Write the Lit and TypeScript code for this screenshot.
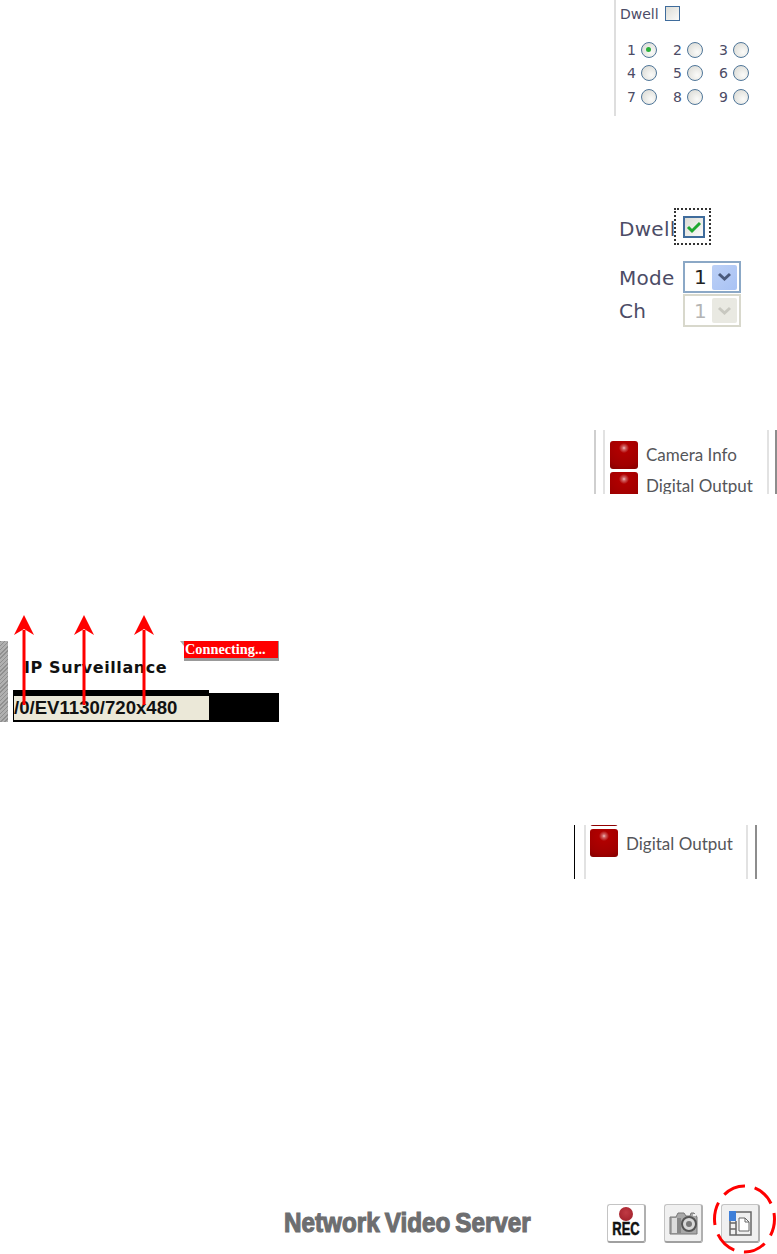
import { LitElement, html, css, svg } from "lit";
import { customElement } from "lit/decorators.js";

@customElement("app-root")
export class AppRoot extends LitElement {
  static styles = css`
    :host { display: block; position: relative; width: 777px; height: 1254px; background: #fff; overflow: hidden; font-family: "DejaVu Sans", sans-serif; }
    .fig { position: absolute; box-sizing: border-box; }

    /* figure 1 */
    .f1 { left: 614px; top: 0; width: 140px; height: 116px; border-left: 2px solid #dedede; color: #4c4c66; font-size: 14px; padding: 6px 0 0 4px; }
    .dwell1 { display: flex; align-items: center; gap: 6px; height: 15px; font-size: 14px; }
    .cb { width: 15px; height: 15px; box-sizing: border-box; border: 1.5px solid #3f6c9c; background: linear-gradient(135deg, #dcdcd6, #fbfbf9); }
    .radios { display: grid; grid-template-columns: repeat(3, 46px); grid-auto-rows: 23.5px; margin: 17px 0 0 7px; }
    .rd { display: flex; align-items: center; gap: 5px; font-size: 14px; }
    .radio { width: 16px; height: 16px; box-sizing: border-box; border: 1.5px solid #4f7699; border-radius: 50%; background: radial-gradient(circle at 65% 65%, #fbfbf9, #d6d6d0); display: flex; align-items: center; justify-content: center; }
    .dot { width: 5px; height: 5px; border-radius: 50%; background: #2ab03a; }

    /* figure 2 */
    .f2 { left: 619px; top: 207px; width: 124px; height: 122px; color: #4c4c66; font-size: 20px; }
    .row2 { display: flex; align-items: center; }
    .row-dwell { height: 44px; letter-spacing: .3px; }
    .lbl { width: 64px; letter-spacing: .3px; padding-top: 1px; }
    .focus { position: absolute; left: 55px; top: 1px; width: 37px; height: 37px; box-sizing: border-box; border: 2px dotted #333; }
    .cb2 { position: absolute; left: 64px; top: 9px; width: 22px; height: 22px; box-sizing: border-box; border: 2px solid #3f6c9c; background: linear-gradient(135deg, #dcdcd6, #fbfbf9); display: flex; align-items: center; justify-content: center; }
    .selects { margin-top: 10px; display: flex; flex-direction: column; gap: 1px; }
    .sel { width: 58px; height: 32px; box-sizing: border-box; border: 2px solid #8ba8c6; background: #fff; display: flex; align-items: center; justify-content: space-between; padding: 2px; color: #222; font-size: 20px; }
    .sel span { padding-left: 7px; }
    .sel .btn { width: 25px; height: 25px; border-radius: 2px; background: linear-gradient(135deg, #bcd0f6, #a8c2f4); display: flex; align-items: center; justify-content: center; }
    .sel.off { border-color: #d8d8cc; color: #b4b4b4; height: 33px; }
    .sel.off .btn { background: #e9e9e2; }

    /* sidebar figures */
    .f3 { left: 594px; top: 430px; width: 183px; height: 64px; overflow: hidden; border-left: 2px solid #cfcfcf; border-right: 2px solid #8d8d8d; }
    .f5 { left: 574px; top: 825px; width: 183px; height: 54px; overflow: hidden; border-left: 1px solid #000; border-right: 2px solid #8d8d8d; }
    .inner { position: absolute; top: 0; bottom: 0; box-sizing: border-box; border-left: 2px solid #e2e2e2; border-right: 2px solid #e2e2e2; display: flex; flex-direction: column; gap: 3px; }
    .f3 .inner { left: 7px; right: 6px; padding: 11px 0 0 5px; }
    .f5 .inner { left: 9px; right: 7px; padding: 0 0 0 4px; margin-top: -27px; }
    .item { display: flex; align-items: center; gap: 8px; font-family: "Lato", sans-serif; font-size: 17px; line-height: 16px; color: #55565a; white-space: nowrap; }
    .f5 .item { padding-top: 0; }
    .f5 .txt { padding-top: 2px; }
    .led { flex: none; width: 28px; height: 28px; border-radius: 3px; background: radial-gradient(circle at 50% 25%, #f0c0c0 0, #d06060 7%, #b00000 20%, #a00000 70%, #820000 100%); }

    /* figure 4 */
    .f4 { left: 0; top: 641px; width: 279px; height: 81px; }
    .hatch { position: absolute; left: 0; top: 0; width: 8px; height: 100%; background: repeating-linear-gradient(135deg, #8f8f8f 0 1px, #b0b0b0 1px 3px); }
    .title { position: absolute; left: 24px; top: 17px; font-family: "DejaVu Sans", sans-serif; font-weight: 700; font-size: 16px; letter-spacing: .6px; color: #111; white-space: nowrap; }
    .conn { position: absolute; left: 184px; top: 0; width: 95px; height: 20px; box-sizing: border-box; background: #f00; border-right: 1px solid #999; border-bottom: 3px solid #999; color: #fff; font: 700 14.3px/16px "Liberation Serif", serif; padding: 0 0 0 1px; white-space: nowrap; }
    .notch { position: absolute; left: 180px; top: 0; width: 0; height: 0; border-top: 5px solid #aaa; border-left: 4px solid transparent; }
    .bar { position: absolute; left: 13px; right: 0; top: 52px; bottom: 0; background: #000; }
    .bartop { position: absolute; left: 13px; width: 196px; top: 49px; height: 6px; background: #000; }
    .path { position: absolute; left: 14px; top: 55px; width: 195px; height: 24px; background: #ebe8d8; font: 700 18.6px/24px "Liberation Sans", sans-serif; color: #111; white-space: nowrap; overflow: hidden; }

    .arrows { position: absolute; left: 0; top: 610px; }

    /* bottom toolbar */
    .brand { left: 284px; top: 1208px; width: 248px; height: 30px; color: #6d6e70; font: 700 28px/30px "Liberation Sans", sans-serif; white-space: nowrap; -webkit-text-stroke: 1.2px #6d6e70; }
    .brand span { display: inline-block; transform: scaleX(.866); transform-origin: left center; word-spacing: -2px; }
    .tools { left: 607px; top: 1204px; display: flex; gap: 18px; }
    .tb { width: 39px; height: 39px; box-sizing: border-box; border: 1px solid #c4c4c4; border-bottom: 2px solid #a0a0a0; border-right: 2px solid #b0b0b0; border-radius: 3px; display: flex; flex-direction: column; align-items: center; justify-content: center; background: #f0f0f0; }
    .tb.rec { background: #fff; }
    .recdot { width: 14px; height: 14px; border-radius: 50%; background: radial-gradient(circle at 50% 40%, #c03a44, #9c1c26); margin-top: -1px; }
    .rectxt { font: 700 18px/17px "Liberation Sans", sans-serif; color: #111; transform: scale(.72, 1.05); -webkit-text-stroke: .5px #111; }
    .ring { position: absolute; left: 710px; top: 1182px; }
  `;

  private head(x: number) {
    return svg`<line x1=${x} y1="20" x2=${x} y2="95" stroke="#f00" stroke-width="3"/>
      <polygon points="${x},5 ${x + 10},25 ${x},19 ${x - 10},25" fill="#f00"/>`;
  }

  render() {
    const nums = [1, 2, 3, 4, 5, 6, 7, 8, 9];
    return html`
      <section class="fig f1">
        <div class="dwell1">Dwell <span class="cb"></span></div>
        <div class="radios">
          ${nums.map(
            (n) => html`<div class="rd">${n}<span class="radio">${n === 1 ? html`<i class="dot"></i>` : ""}</span></div>`
          )}
        </div>
      </section>

      <section class="fig f2">
        <div class="row2 row-dwell">Dwell</div>
        <span class="focus"></span>
        <span class="cb2">
          <svg width="16" height="14" viewBox="0 0 16 14"><path d="M2 7l4 4 8-8" fill="none" stroke="#1fa830" stroke-width="3"/></svg>
        </span>
        <div class="selects">
          <div class="row2"><span class="lbl">Mode</span>
            <div class="sel"><span>1</span><i class="btn"><svg width="15" height="10" viewBox="0 0 15 10"><path d="M2 2l5.500 5 5.500-5" fill="none" stroke="#4a5a7c" stroke-width="3"/></svg></i></div>
          </div>
          <div class="row2"><span class="lbl">Ch</span>
            <div class="sel off"><span>1</span><i class="btn"><svg width="15" height="10" viewBox="0 0 15 10"><path d="M2 2l5.500 5 5.500-5" fill="none" stroke="#c8c8c0" stroke-width="3"/></svg></i></div>
          </div>
        </div>
      </section>

      <section class="fig f3">
        <div class="inner">
          <div class="item"><i class="led"></i>Camera Info</div>
          <div class="item"><i class="led"></i>Digital Output</div>
        </div>
      </section>

      <section class="fig f4">
        <div class="hatch"></div>
        <div class="title">IP Surveillance</div>
        <div class="notch"></div>
        <div class="conn">Connecting...</div>
        <div class="bar"></div>
        <div class="bartop"></div>
        <div class="path">/0/EV1130/720x480</div>
      </section>
      <svg class="arrows" width="160" height="100" viewBox="0 0 160 100">
        ${this.head(24)}${this.head(84)}${this.head(144)}
      </svg>

      <section class="fig f5">
        <div class="inner">
          <div class="item"><i class="led"></i></div>
          <div class="item"><i class="led"></i><span class="txt">Digital Output</span></div>
        </div>
      </section>

      <div class="fig brand"><span>Network Video Server</span></div>

      <div class="fig tools">
        <div class="tb rec"><i class="recdot"></i><span class="rectxt">REC</span></div>
        <div class="tb">
          <svg width="31" height="28" viewBox="0 0 31 28">
            <path d="M2 8h6l2-4h6l2 3h4l1-3h3l3 4v17H2z" fill="#a8a8a8" stroke="#777"/>
            <rect x="4" y="9" width="5" height="15" fill="#dcdcdc"/>
            <path d="M10 9v15M12 9v15" stroke="#666" stroke-width="1"/>
            <circle cx="21" cy="15" r="7" fill="#d8d8d8" stroke="#555" stroke-width="2"/>
            <circle cx="21" cy="15" r="3" fill="#777"/>
            <rect x="25" y="5" width="3" height="2" fill="#eee"/>
          </svg>
        </div>
        <div class="tb">
          <svg width="26" height="28" viewBox="0 0 26 28">
            <rect x="3" y="3" width="21" height="23" fill="#f0f0f0" stroke="#666" stroke-width="1.500"/>
            <rect x="2" y="2" width="7" height="10" fill="#3f7fd8"/>
            <path d="M3 14h6M3 20h6M9 12v14" stroke="#666" stroke-width="1.500"/>
            <path d="M12 9h6l4 4v9H12z" fill="#fff" stroke="#666"/>
            <path d="M18 9v4h4" fill="none" stroke="#666"/>
          </svg>
        </div>
      </div>

      <svg class="ring" width="67" height="72" viewBox="0 0 67 72">
        <ellipse cx="34.500" cy="37" rx="30" ry="33" fill="none" stroke="#f00" stroke-width="3" pathLength="200" stroke-dasharray="23.300 10" stroke-dashoffset="6"/>
      </svg>
    `;
  }
}
